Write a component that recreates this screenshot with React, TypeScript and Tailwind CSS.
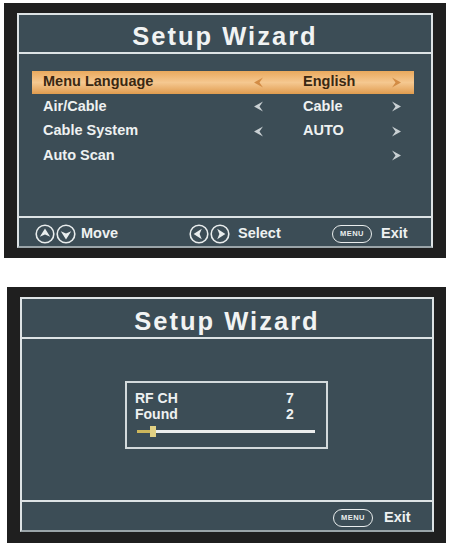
import React from "react";

const font = "font-['Liberation_Sans',Arial,sans-serif]";

const ArrowL = ({ color }: { color: string }) => (
  <svg width="9" height="11" viewBox="0 0 9 11">
    <polygon points="9,0.5 0,5.5 9,10.5 5.5,5.5" fill={color} />
  </svg>
);

const ArrowR = ({ color }: { color: string }) => (
  <svg width="9" height="11" viewBox="0 0 9 11">
    <polygon points="0,0.5 9,5.5 0,10.5 3.5,5.5" fill={color} />
  </svg>
);

// round remote key with a chevron inside
const Key = ({ dir }: { dir: "up" | "down" | "left" | "right" }) => {
  const rot = { up: 0, right: 90, down: 180, left: 270 }[dir];
  return (
    <svg width="20" height="20" viewBox="0 0 20 20">
      <circle cx="10" cy="10" r="8.8" fill="none" stroke="#e9eded" strokeWidth="1.6" />
      <g transform={`rotate(${rot} 10 10)`}>
        <polygon points="10,4.6 15.2,12.8 10,10.6 4.8,12.8" fill="#e9eded" />
      </g>
    </svg>
  );
};

const MenuKey = () => (
  <div className="flex h-[18px] w-[40px] items-center justify-center rounded-full border-[1.5px] border-[#e9eded] text-[7.5px] font-bold tracking-[0.5px] text-[#e9eded]">
    MENU
  </div>
);

type Row = { label: string; value?: string; left?: boolean; active?: boolean };

const rows: Row[] = [
  { label: "Menu Language", value: "English", left: true, active: true },
  { label: "Air/Cable", value: "Cable", left: true },
  { label: "Cable System", value: "AUTO", left: true },
  { label: "Auto Scan" },
];

const Title = ({ h }: { h: string }) => (
  <div className={`${h} flex items-end justify-center pb-[3px]`}>
    <span className="text-[25.5px] leading-none font-bold tracking-[2px] text-[#f1f3f3]">Setup Wizard</span>
  </div>
);

const Line = () => <div className="h-[2px] bg-[#dde3e5]" />;

export default function App() {
  return (
    <div className={`min-h-[550px] w-[452px] bg-white pt-[3px] ${font}`}>
      {/* first screen */}
      <div className="ml-[4px] w-[442px] bg-[#1f1f1f] px-[13px] py-[10px]">
        <div className="flex h-[235px] flex-col border-2 border-[#dde3e5] border-b-[#9aa4a8] bg-[#3c4d56]">
          <Title h="h-[37px]" />
          <Line />
          <div className="flex h-[162px] flex-col pt-[16px]">
            {rows.map((r) => (
              <div key={r.label} className="flex h-[24.5px] items-center">
                <div
                  className={`ml-[13px] mr-[17px] flex h-[23px] flex-1 items-center pl-[11px] text-[14.5px] font-bold ${
                    r.active
                      ? "bg-gradient-to-b from-[#eaa95c] via-[#f5c890] to-[#e09c4e] text-[#3a2812]"
                      : "text-[#eef1f1]"
                  }`}
                >
                  <span className="w-[211px]">{r.label}</span>
                  <span className="w-[49px]">
                    {r.left && <ArrowL color={r.active ? "#d38c45" : "#c9d0d3"} />}
                  </span>
                  <span className="w-[89px]">{r.value}</span>
                  <ArrowR color={r.active ? "#d38c45" : "#c9d0d3"} />
                </div>
              </div>
            ))}
          </div>
          <Line />
          <div className="flex h-[28px] items-center pl-[16px] pt-[3px] text-[14.5px] font-bold text-[#eef1f1]">
            <div className="flex w-[154px] items-center">
              <Key dir="up" />
              <span className="ml-[1px]" />
              <Key dir="down" />
              <span className="ml-[5px]">Move</span>
            </div>
            <div className="flex w-[143px] items-center">
              <Key dir="left" />
              <span className="ml-[1px]" />
              <Key dir="right" />
              <span className="ml-[8px]">Select</span>
            </div>
            <div className="flex items-center">
              <MenuKey />
              <span className="ml-[9px]">Exit</span>
            </div>
          </div>
        </div>
      </div>

      {/* second screen: scanning */}
      <div className="ml-[7px] mt-[29px] w-[439px] bg-[#1f1f1f] pl-[13px] pr-[12px] pt-[10px] pb-[11px]">
        <div className="flex h-[235px] flex-col border-2 border-[#dde3e5] border-b-[#9aa4a8] bg-[#3c4d56]">
          <Title h="h-[38px]" />
          <Line />
          <div className="h-[161px] pt-[42px]">
            <div className="ml-[103px] h-[68px] w-[203px] border-2 border-[#d3dadc] pt-[7px] text-[14px] font-bold text-[#eef1f1]">
              <div className="flex h-[16px] items-center pl-[8px]">
                <span className="w-[151px]">RF CH</span>
                <span>7</span>
              </div>
              <div className="flex h-[16px] items-center pl-[8px]">
                <span className="w-[151px]">Found</span>
                <span>2</span>
              </div>
              <div className="relative ml-[10px] mt-[8px] h-[3px] w-[178px] bg-[#eceeee]">
                <div className="h-full w-[15px] bg-[#cdb75c]" />
                <div className="absolute left-[13px] top-[-4px] h-[11px] w-[6px] bg-[#e2d184]" />
              </div>
            </div>
          </div>
          <Line />
          <div className="flex h-[28px] items-center pl-[311px] pt-[3px] text-[14.5px] font-bold text-[#eef1f1]">
            <MenuKey />
            <span className="ml-[11px]">Exit</span>
          </div>
        </div>
      </div>
    </div>
  );
}
